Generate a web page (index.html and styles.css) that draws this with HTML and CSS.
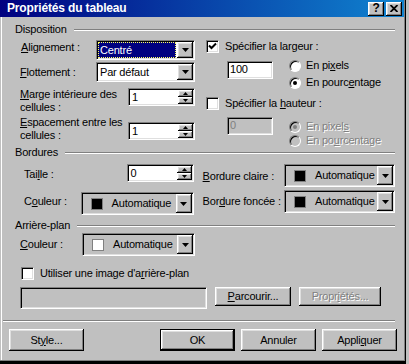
FILE: index.html
```html
<!DOCTYPE html>
<html lang="fr">
<head>
    <meta charset="UTF-8">
    <title>Propriétés du tableau</title>
    <link rel="stylesheet" href="styles.css">
</head>
<body>

<div class="window">
    <div class="titlebar">
        <span class="title">Propriétés du tableau</span>
        <span class="tbtn raised">?</span>
        <span class="tbtn raised">
            <svg width="8" height="7" viewBox="0 0 8 7"><path d="M0.5 0L7.5 7M7.5 0L0.5 7" stroke="#000" stroke-width="1.8"/></svg>
        </span>
    </div>

    <div class="client">
        <!-- Disposition -->
        <div class="group-title"><span>Disposition</span><i class="etch"></i></div>
        <div class="disposition">
            <div class="col-left">
                <div class="row r-align">
                    <label class="lbl-top"><u>A</u>lignement :</label>
                    <div class="combo sunken">
                        <span class="combo-val sel">Centré</span>
                        <span class="drop raised"><svg width="7" height="4" viewBox="0 0 7 4"><path d="M0 0h7L3.5 4z"/></svg></span>
                    </div>
                </div>
                <div class="row r-float">
                    <label><u>F</u>lottement :</label>
                    <div class="combo sunken">
                        <span class="combo-val">Par défaut</span>
                        <span class="drop raised"><svg width="7" height="4" viewBox="0 0 7 4"><path d="M0 0h7L3.5 4z"/></svg></span>
                    </div>
                </div>
                <div class="row r-marge">
                    <label class="two-lines"><u>M</u>arge intérieure des<br>cellules :</label>
                    <div class="spin sunken">
                        <span class="val">1</span>
                        <span class="spin-btns">
                            <span class="sb raised"><svg width="5" height="3" viewBox="0 0 5 3"><path d="M2.5 0L5 3H0z"/></svg></span>
                            <span class="sb raised"><svg width="5" height="3" viewBox="0 0 5 3"><path d="M0 0h5L2.5 3z"/></svg></span>
                        </span>
                    </div>
                </div>
                <div class="row r-espace">
                    <label class="two-lines"><u>E</u>spacement entre les<br>cellules :</label>
                    <div class="spin sunken">
                        <span class="val">1</span>
                        <span class="spin-btns">
                            <span class="sb raised"><svg width="5" height="3" viewBox="0 0 5 3"><path d="M2.5 0L5 3H0z"/></svg></span>
                            <span class="sb raised"><svg width="5" height="3" viewBox="0 0 5 3"><path d="M0 0h5L2.5 3z"/></svg></span>
                        </span>
                    </div>
                </div>
            </div>

            <div class="col-right">
                <div class="check-row">
                    <span class="check sunken"><svg width="9" height="9" viewBox="0 0 9 9"><path d="M1 3.5l2.5 2.5L8 1.5" fill="none" stroke="#000" stroke-width="2"/></svg></span>
                    <span>Spécifier la lar<u>g</u>eur :</span>
                </div>
                <div class="size-block">
                    <div class="field-input sunken">100</div>
                    <div class="radios">
                        <div class="radio-row"><span class="radio"></span><span>En pi<u>x</u>els</span></div>
                        <div class="radio-row"><span class="radio on"></span><span>En pourc<u>e</u>ntage</span></div>
                    </div>
                </div>
                <div class="check-row hauteur">
                    <span class="check sunken"></span>
                    <span>Spécifier la <u>h</u>auteur :</span>
                </div>
                <div class="size-block off">
                    <div class="field-input sunken disabled-field">0</div>
                    <div class="radios">
                        <div class="radio-row"><span class="radio on dis"></span><span class="dim">En pixel<u>s</u></span></div>
                        <div class="radio-row"><span class="radio dis"></span><span class="dim">En po<u>u</u>rcentage</span></div>
                    </div>
                </div>
            </div>
        </div>

        <!-- Bordures -->
        <div class="group-title"><span>Bordures</span><i class="etch"></i></div>
        <div class="bordures">
            <div class="bl-left">
                <div class="row r-taille">
                    <label>Tai<u>l</u>le :</label>
                    <div class="spin sunken">
                        <span class="val">0</span>
                        <span class="spin-btns">
                            <span class="sb raised"><svg width="5" height="3" viewBox="0 0 5 3"><path d="M2.5 0L5 3H0z"/></svg></span>
                            <span class="sb raised"><svg width="5" height="3" viewBox="0 0 5 3"><path d="M0 0h5L2.5 3z"/></svg></span>
                        </span>
                    </div>
                </div>
                <div class="row r-couleur">
                    <label>C<u>o</u>uleur :</label>
                    <div class="colorbox sunken">
                        <span class="swatch"></span><span class="cb-text">Automatique</span>
                        <span class="drop raised"><svg width="7" height="4" viewBox="0 0 7 4"><path d="M0 0h7L3.5 4z"/></svg></span>
                    </div>
                </div>
            </div>
            <div class="bl-right">
                <div class="row r-claire">
                    <label><u>B</u>ordure claire :</label>
                    <div class="colorbox sunken wide">
                        <span class="swatch"></span><span class="cb-text">Automatique</span>
                        <span class="drop raised"><svg width="7" height="4" viewBox="0 0 7 4"><path d="M0 0h7L3.5 4z"/></svg></span>
                    </div>
                </div>
                <div class="row r-foncee">
                    <label>Bor<u>d</u>ure foncée :</label>
                    <div class="colorbox sunken wide">
                        <span class="swatch"></span><span class="cb-text">Automatique</span>
                        <span class="drop raised"><svg width="7" height="4" viewBox="0 0 7 4"><path d="M0 0h7L3.5 4z"/></svg></span>
                    </div>
                </div>
            </div>
        </div>

        <!-- Arrière-plan -->
        <div class="group-title g-fond"><span>Arrière-plan</span><i class="etch"></i></div>
        <div class="arriere">
            <div class="row r-fond">
                <label><u>C</u>ouleur :</label>
                <div class="colorbox sunken">
                    <span class="swatch white"></span><span class="cb-text">Automatique</span>
                    <span class="drop raised"><svg width="7" height="4" viewBox="0 0 7 4"><path d="M0 0h7L3.5 4z"/></svg></span>
                </div>
            </div>
            <div class="check-row r-image">
                <span class="check sunken"></span>
                <span>Utiliser une image d'a<u>r</u>rière-plan</span>
            </div>
            <div class="browse-row">
                <div class="path-field sunken"></div>
                <span class="btn raised b-browse"><u>P</u>arcourir...</span>
                <span class="btn raised b-props dim">Propr<u>i</u>étés...</span>
            </div>
        </div>

        <div class="sep"></div>

        <div class="buttons">
            <span class="btn raised">St<u>y</u>le...</span>
            <span class="spacer"></span>
            <span class="btn raised default">OK</span>
            <span class="btn raised">Annuler</span>
            <span class="btn raised">Appli<u>q</u>uer</span>
        </div>
    </div>
</div>

</body>
</html>
```

FILE: styles.css
```css
body {
    margin: 0;
    background: #c0c0c0;
    font-family: "Liberation Sans", Arial, sans-serif;
    font-size: 11px;
    line-height: 13px;
    letter-spacing: -0.2px;
    color: #000;
}

u {
    text-decoration: underline;
    text-underline-offset: 1px;
}

/* relieves Windows 98 */
.sunken {
    box-sizing: border-box;
    border: 1px solid;
    border-color: #808080 #fff #fff #808080;
    box-shadow: inset 1px 1px #000, inset -1px -1px #dfdfdf;
}

.raised {
    box-sizing: border-box;
    background: #c0c0c0;
    box-shadow: inset -1px -1px #000, inset 1px 1px #fff, inset -2px -2px #808080, inset 2px 2px #dfdfdf;
}

.window {
    width: 406px;
    height: 364px;
    box-sizing: border-box;
    padding: 0 2px 0 3px;
    background: #c0c0c0;
    box-shadow: inset -1px -3px #000, inset -2px -4px #808080, inset 1px 0 #c0c0c0, inset 2px 0 #fff;
}

.titlebar {
    display: flex;
    align-items: center;
    height: 17px;
    margin-left: -3px;
    padding: 0 2px 0 7px;
    background: linear-gradient(90deg, #000080, #1084d0);
    color: #fff;
}

.title {
    flex: 1;
    font-weight: bold;
    font-size: 12px;
    letter-spacing: -0.15px;
}

.tbtn {
    width: 16px;
    height: 14px;
    margin-left: 2px;
    display: flex;
    align-items: center;
    justify-content: center;
    color: #000;
    font-weight: bold;
    font-size: 12px;
}

.client {
    padding: 6px 9px 0 12px;
}

.group-title {
    display: flex;
    align-items: center;
    height: 13px;
}

.etch {
    flex: 1;
    margin-left: 7px;
    border-top: 1px solid #808080;
    border-bottom: 1px solid #fff;
}

.row {
    display: flex;
    justify-content: space-between;
    align-items: flex-start;
}

.row label {
    white-space: nowrap;
}

/* Disposition */
.disposition {
    display: flex;
    height: 106px;
    margin: 4px 0 0 5px;
}

.col-left {
    width: 175px;
}

.col-right {
    flex: 1;
    margin-left: 11px;
}

.r-align {
    height: 20px;
}

.lbl-top {
    padding: 1px 0 0 1px;
}

.r-float {
    height: 20px;
    margin-top: 2px;
    align-items: center;
}

.r-marge {
    margin-top: 6px;
}

.r-espace {
    margin-top: 2px;
}

.r-espace .spin {
    margin-top: 6px;
}

.combo {
    width: 99px;
    height: 20px;
    padding: 1px;
    display: flex;
    background: #fff;
}

.combo-val {
    flex: 1;
    padding-left: 2px;
    line-height: 16px;
}

.sel {
    box-sizing: border-box;
    margin-right: 1px;
    padding-left: 1px;
    line-height: 14px;
    background: #000080;
    color: #fff;
    border: 1px dotted #ffff60;
}

.drop {
    width: 16px;
    display: flex;
    align-items: center;
    justify-content: center;
}

.spin {
    width: 67px;
    height: 18px;
    padding: 1px;
    display: flex;
    background: #fff;
}

.val {
    flex: 1;
    padding-left: 2px;
    line-height: 14px;
}

.spin-btns {
    width: 15px;
    display: flex;
    flex-direction: column;
}

.sb {
    flex: 1;
    display: flex;
    align-items: center;
    justify-content: center;
}

.check-row {
    display: flex;
    align-items: center;
    height: 13px;
}

.check {
    width: 13px;
    height: 13px;
    margin-right: 6px;
    display: flex;
    align-items: center;
    justify-content: center;
    background: #fff;
}

.size-block {
    display: flex;
    margin: 6px 0 0 21px;
}

.field-input {
    width: 46px;
    height: 18px;
    margin-top: 2px;
    padding-left: 2px;
    line-height: 15px;
    background: #fff;
}

.radios {
    margin-left: 16px;
}

.radio-row {
    display: flex;
    align-items: center;
    height: 13px;
}

.radio-row + .radio-row {
    margin-top: 4px;
}

.radio {
    width: 12px;
    height: 12px;
    margin-right: 5px;
    box-sizing: border-box;
    border-radius: 50%;
    border: 1px solid;
    border-color: #808080 #fff #fff #808080;
    box-shadow: inset 1px 1px #000;
    background: #fff;
    display: flex;
    align-items: center;
    justify-content: center;
}

.radio.on::after {
    content: "";
    width: 4px;
    height: 4px;
    border-radius: 50%;
    background: #000;
}

.radio.dis {
    background: #c0c0c0;
}

.radio.dis::after {
    background: #808080;
}

.hauteur {
    margin-top: 8px;
}

.size-block.off {
    margin-top: 7px;
}

.size-block.off .field-input {
    margin-top: 0;
}

.size-block.off .radios {
    padding-top: 3px;
}

.size-block.off .radio-row + .radio-row {
    margin-top: 1px;
}

.disabled-field {
    background: #c0c0c0;
    color: #808080;
}

.dim {
    color: #808080;
    text-shadow: 1px 1px #fff;
}

/* Bordures */
.bordures {
    display: flex;
    height: 51px;
    margin: 5px 0 0 9px;
}

.bl-left {
    width: 171px;
}

.bl-right {
    width: 194px;
    margin-left: 9px;
}

.r-taille label {
    padding-top: 4px;
}

.r-couleur {
    margin-top: 10px;
}

.r-couleur label {
    padding-top: 3px;
}

.r-claire label {
    padding-top: 6px;
}

.r-foncee {
    margin-top: 3px;
}

.r-foncee label {
    padding-top: 5px;
}

.colorbox {
    width: 113px;
    height: 23px;
    padding: 1px;
    display: flex;
    align-items: center;
    background: #c0c0c0;
}

.colorbox.wide {
    width: 111px;
}

.colorbox .drop {
    align-self: stretch;
    margin-left: auto;
}

.swatch {
    width: 12px;
    height: 12px;
    margin-left: 8px;
    box-sizing: border-box;
    border: 1px solid #808080;
    background: #000;
}

.swatch.white {
    background: #fff;
}

.cb-text {
    margin-left: 9px;
}

/* Arrière-plan */
.g-fond {
    margin-top: 4px;
}

.arriere {
    margin: 1px 0 0 5px;
}

.r-fond {
    width: 175px;
}

.r-fond label {
    padding-top: 5px;
}

.r-image {
    margin: 11px 0 0 1px;
}

.browse-row {
    display: flex;
    align-items: flex-start;
    margin-top: 7px;
}

.path-field {
    width: 187px;
    height: 22px;
}

.btn {
    width: 75px;
    height: 22px;
    display: flex;
    align-items: center;
    justify-content: center;
}

.b-browse {
    width: 76px;
    height: 19px;
    margin-left: 8px;
}

.b-props {
    width: 82px;
    height: 19px;
    margin-left: 8px;
}

.sep {
    margin: 11px 0 0 -12px;
    border-top: 1px solid #808080;
    border-bottom: 1px solid #fff;
}

.buttons {
    display: flex;
    gap: 6px;
    margin: 7px -2px 0 -6px;
}

.spacer {
    flex: 1;
}

.btn.default {
    border: 1px solid #000;
}
```
